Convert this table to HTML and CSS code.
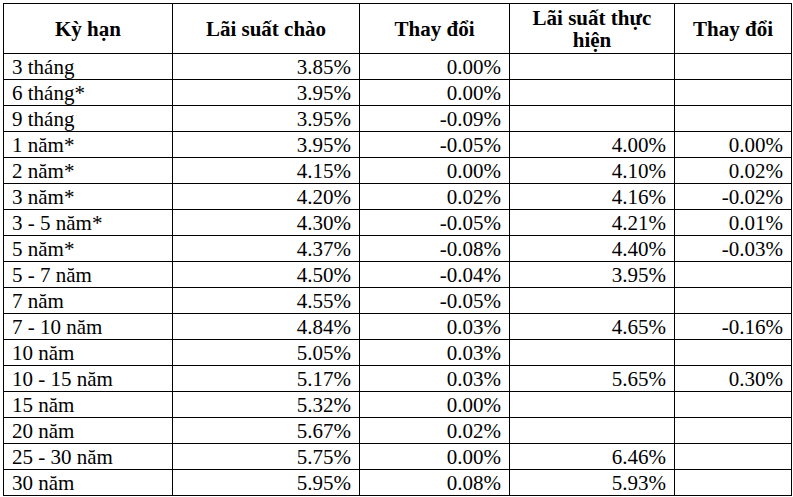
FILE: index.html
```html
<!DOCTYPE html>
<html lang="vi">
<head>
<meta charset="utf-8">
<title>Lãi suất</title>
<link rel="stylesheet" href="styles.css">
</head>
<body>
<table class="rates">
  <colgroup>
    <col class="c1"><col class="c2"><col class="c3"><col class="c4"><col class="c5">
  </colgroup>
  <thead>
    <tr>
      <th>Kỳ hạn</th>
      <th>Lãi suất chào</th>
      <th>Thay đổi</th>
      <th>Lãi suất thực hiện</th>
      <th>Thay đổi</th>
    </tr>
  </thead>
  <tbody>
    <tr><td>3 tháng</td><td>3.85%</td><td>0.00%</td><td></td><td></td></tr>
    <tr><td>6 tháng*</td><td>3.95%</td><td>0.00%</td><td></td><td></td></tr>
    <tr><td>9 tháng</td><td>3.95%</td><td>-0.09%</td><td></td><td></td></tr>
    <tr><td>1 năm*</td><td>3.95%</td><td>-0.05%</td><td>4.00%</td><td>0.00%</td></tr>
    <tr><td>2 năm*</td><td>4.15%</td><td>0.00%</td><td>4.10%</td><td>0.02%</td></tr>
    <tr><td>3 năm*</td><td>4.20%</td><td>0.02%</td><td>4.16%</td><td>-0.02%</td></tr>
    <tr><td>3 - 5 năm*</td><td>4.30%</td><td>-0.05%</td><td>4.21%</td><td>0.01%</td></tr>
    <tr><td>5 năm*</td><td>4.37%</td><td>-0.08%</td><td>4.40%</td><td>-0.03%</td></tr>
    <tr><td>5 - 7 năm</td><td>4.50%</td><td>-0.04%</td><td>3.95%</td><td></td></tr>
    <tr><td>7 năm</td><td>4.55%</td><td>-0.05%</td><td></td><td></td></tr>
    <tr><td>7 - 10 năm</td><td>4.84%</td><td>0.03%</td><td>4.65%</td><td>-0.16%</td></tr>
    <tr><td>10 năm</td><td>5.05%</td><td>0.03%</td><td></td><td></td></tr>
    <tr><td>10 - 15 năm</td><td>5.17%</td><td>0.03%</td><td>5.65%</td><td>0.30%</td></tr>
    <tr><td>15 năm</td><td>5.32%</td><td>0.00%</td><td></td><td></td></tr>
    <tr><td>20 năm</td><td>5.67%</td><td>0.02%</td><td></td><td></td></tr>
    <tr><td>25 - 30 năm</td><td>5.75%</td><td>0.00%</td><td>6.46%</td><td></td></tr>
    <tr><td>30 năm</td><td>5.95%</td><td>0.08%</td><td>5.93%</td><td></td></tr>
  </tbody>
</table>
</body>
</html>
```

FILE: styles.css
```css
html, body {
  margin: 0;
  padding: 0;
  background: #ffffff;
}

body {
  padding: 3px 0 0 3px;
  font-family: "Liberation Serif", Tinos, "Times New Roman", Times, "Nimbus Roman", "FreeSerif", "Noto Serif", "DejaVu Serif", serif;
  font-size: 21px;
  color: #000;
}

.rates {
  border-collapse: collapse;
  table-layout: fixed;
  width: 788px;
  font: inherit;
}

.c1 { width: 169px; }
.c2 { width: 187px; }
.c3 { width: 150px; }
.c4 { width: 165px; }
.c5 { width: 117px; }

.rates th,
.rates td {
  border: 1.5px solid #000;
  padding: 0 8px;
  font-family: "Liberation Serif", Tinos, "Times New Roman", Times, "Nimbus Roman", "FreeSerif", "Noto Serif", "DejaVu Serif", serif;
}

.rates th {
  height: 49px;
  font-weight: bold;
  text-align: center;
  vertical-align: middle;
  line-height: 22px;
  padding: 0 6px;
}

.rates td {
  height: 25px;
  line-height: 24px;
  text-align: right;
  vertical-align: middle;
  white-space: nowrap;
}

.rates td:first-child {
  text-align: left;
}
```
